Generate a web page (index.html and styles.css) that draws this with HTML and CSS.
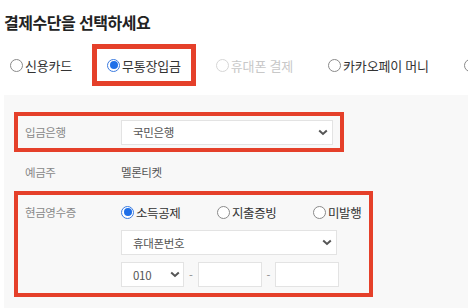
FILE: index.html
```html
<!DOCTYPE html>
<html lang="ko">
<head>
<meta charset="utf-8">
<link rel="stylesheet" href="styles.css">
</head>
<body>
<h2 class="title">결제수단을 선택하세요</h2>
<div class="methods">
  <label class="radio"><span class="dot"></span>신용카드</label>
  <label class="radio checked hl-top"><span class="dot"></span>무통장입금</label>
  <label class="radio disabled"><span class="dot"></span>휴대폰 결제</label>
  <label class="radio"><span class="dot"></span>카카오페이 머니</label>
  <label class="radio"><span class="dot"></span></label>
</div>
<div class="panel">
  <div class="row row-bank hl">
    <div class="label">입금은행</div>
    <div class="select select-bank"><span>국민은행</span>
      <svg class="chev" width="10" height="7" viewBox="0 0 10 7"><polyline points="1.2,1.5 5,5 8.8,1.5" fill="none" stroke="#555" stroke-width="2"/></svg>
    </div>
  </div>
  <div class="row row-owner">
    <div class="label">예금주</div>
    <div class="value">멜론티켓</div>
  </div>
  <div class="row row-receipt hl">
    <div class="label label-top">현금영수증</div>
    <div class="receipt">
      <div class="types">
        <label class="radio checked"><span class="dot"></span>소득공제</label>
        <label class="radio"><span class="dot"></span>지출증빙</label>
        <label class="radio"><span class="dot"></span>미발행</label>
      </div>
      <div class="select select-kind"><span>휴대폰번호</span>
        <svg class="chev" width="10" height="7" viewBox="0 0 10 7"><polyline points="1.2,1.5 5,5 8.8,1.5" fill="none" stroke="#555" stroke-width="2"/></svg>
      </div>
      <div class="phone">
        <div class="select select-pre"><span>010</span>
          <svg class="chev" width="10" height="7" viewBox="0 0 10 7"><polyline points="1.2,1.5 5,5 8.8,1.5" fill="none" stroke="#555" stroke-width="2"/></svg>
        </div>
        <span class="dash">-</span>
        <div class="input"></div>
        <span class="dash">-</span>
        <div class="input"></div>
      </div>
    </div>
  </div>
</div>
</body>
</html>
```
FILE: styles.css
```css
html, body {
  margin: 0;
  padding: 0;
}
body {
  width: 468px;
  height: 308px;
  overflow: hidden;
  background: #fff;
  font-family: "Noto Sans CJK KR", "Noto Sans", sans-serif;
  color: #333;
}
.title {
  margin: 0;
  padding: 12px 0 0 4px;
  font-size: 16px;
  line-height: 20px;
  font-weight: 700;
  color: #222;
  letter-spacing: -0.5px;
}
.methods {
  display: flex;
  align-items: center;
  gap: 35px;
  margin-top: 24px;
  padding-left: 10px;
  height: 18px;
  white-space: nowrap;
}
.radio {
  position: relative;
  display: flex;
  align-items: center;
  gap: 2px;
  height: 18px;
  font-size: 13px;
  letter-spacing: -0.2px;
  color: #333;
  flex: none;
}
.dot {
  width: 13px;
  height: 13px;
  box-sizing: border-box;
  border: 1px solid #8a8a8a;
  border-radius: 50%;
  background: #fff;
  flex: none;
  position: relative;
}
.radio.checked .dot {
  border: 1px solid #3b7be0;
}
.radio.checked .dot::before {
  content: "";
  position: absolute;
  left: 1.5px;
  top: 1.5px;
  width: 8px;
  height: 8px;
  border-radius: 50%;
  background: #1f6fe8;
}
.radio.disabled {
  color: #c8c8c8;
}
.radio.disabled .dot {
  border-color: #d6d6d6;
}
.hl-top::after {
  content: "";
  position: absolute;
  left: -15px;
  right: -15px;
  top: -12px;
  bottom: -12px;
  border: 5px solid #e5402a;
  pointer-events: none;
}
.panel {
  margin: 21px 0 0 4px;
  height: 213px;
  box-sizing: border-box;
  background: #f8f8f8;
  padding-top: 17px;
}
.row {
  position: relative;
  display: flex;
  margin-left: 10px;
  box-sizing: border-box;
}
.hl::after {
  content: "";
  position: absolute;
  inset: 0;
  border: 4px solid #e5402a;
  pointer-events: none;
}
.label {
  width: 96px;
  padding-left: 11px;
  flex: none;
  font-size: 11.5px;
  letter-spacing: -0.4px;
  color: #888;
}
.row-bank {
  width: 330px;
  height: 40px;
  align-items: center;
}
.row-owner {
  height: 39px;
  align-items: center;
}
.value {
  font-size: 11.5px;
  letter-spacing: -0.4px;
  color: #555;
}
.row-receipt {
  width: 359px;
  height: 106px;
  padding-top: 12px;
}
.label-top {
  line-height: 16px;
  margin-top: 1px;
}
.receipt {
  display: flex;
  flex-direction: column;
}
.types {
  display: grid;
  grid-template-columns: 96px 96px auto;
  height: 18px;
}
.types .radio {
  font-size: 12.5px;
  letter-spacing: -0.4px;
}
.select {
  display: flex;
  align-items: center;
  justify-content: space-between;
  box-sizing: border-box;
  height: 25px;
  border: 1px solid #e3e3e3;
  background: #fff;
  padding: 0 4px 0 11px;
  font-size: 11.5px;
  letter-spacing: -0.3px;
  color: #555;
}
.chev {
  display: block;
  flex: none;
}
.select-bank {
  width: 212px;
}
.select-kind {
  width: 216px;
  margin-top: 9px;
}
.phone {
  display: grid;
  grid-template-columns: 63px 14px 64px 13px 64px;
  align-items: center;
  margin-top: 7px;
}
.select-pre {
  width: 63px;
  padding-right: 3px;
}
.dash {
  text-align: center;
  font-size: 11px;
  color: #888;
}
.input {
  height: 25px;
  box-sizing: border-box;
  border: 1px solid #e3e3e3;
  background: #fff;
}
```
